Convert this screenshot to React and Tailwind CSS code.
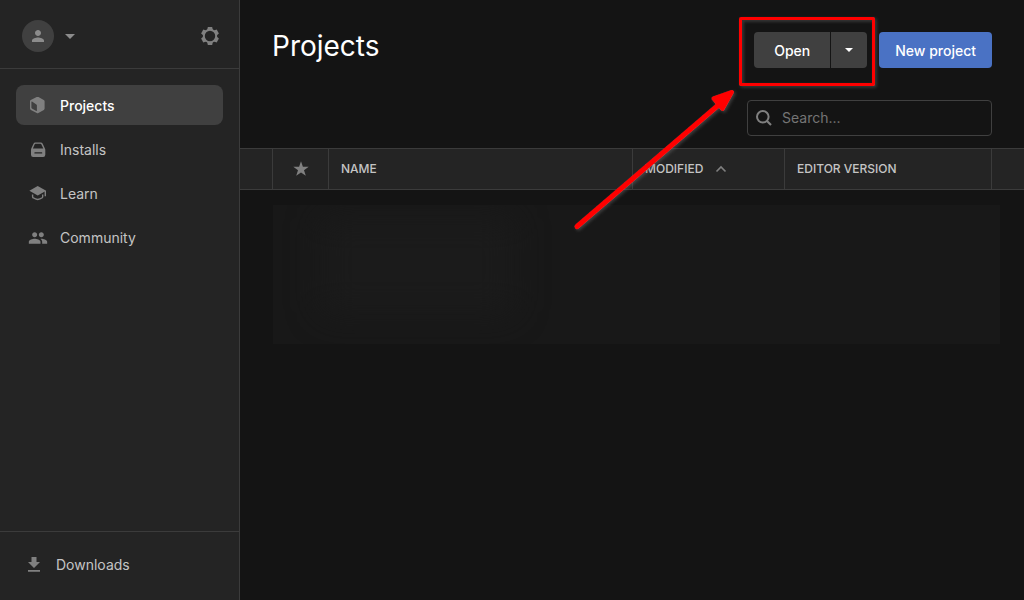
import React from "react";
import { MdPeople, MdPerson } from "react-icons/md";

function Caret({ className }) {
  return (
    <svg viewBox="0 0 10 5" className={className} fill="currentColor" aria-hidden="true">
      <path d="M0 0h10L5 5z" />
    </svg>
  );
}

function GearIcon() {
  return (
    <svg viewBox="-10 -10 20 20" className="size-5" fill="currentColor" aria-hidden="true">
      <circle r="6.2" fill="none" stroke="currentColor" strokeWidth="2" />
      {[0, 60, 120, 180, 240, 300].map((angle) => (
        <path key={angle} transform={`rotate(${angle})`} d="M-2.800-6L-2.200-9h4.400l.600 3L0-5.800z" />
      ))}
    </svg>
  );
}

function CubeIcon() {
  return (
    <svg viewBox="0 1 18 18" className="size-[18px]" fill="currentColor" aria-hidden="true">
      <path
        fillRule="evenodd"
        d="M7.900.9Q8.600.6 9.300.9l5.400 3.100q.9.400.9 1.300v7.200q0 .9-.8 1.400l-5.400 3.100q-.8.400-1.600 0l-5.900-3.100Q1 13.400 1 12.500V5.300q0-.9.800-1.300zM2.400 5.800v5.800q0 .5.500.8l4.400 2.500q.6.300.6-.3V9.300q0-.6-.5-.9L3 5.500q-.6-.3-.6.300z"
      />
    </svg>
  );
}

function DriveIcon() {
  return (
    <svg viewBox="0 0 18 18" className="size-[18px]" fill="currentColor" aria-hidden="true">
      <path
        fillRule="evenodd"
        d="M6.300 1.500h5.400q1.400 0 2 1.300l2.200 4.700q.4.800.4 1.600v4.700q0 2.200-2.200 2.200H4.200q-2.200 0-2.200-2.200V9.100q0-.8.300-1.600l2.200-4.700q.5-1.300 1.800-1.300zM6.400 2.800q-.5 0-.7.500L3.900 7.500h10.400l-2-4.200q-.2-.5-.8-.5zM6 11.200q-.7 0-.7.700t.7.700h6.600q.7 0 .7-.7t-.7-.7z"
      />
    </svg>
  );
}

function LearnIcon() {
  return (
    <svg viewBox="0 0 18 18" className="size-[18px]" fill="currentColor" aria-hidden="true">
      <path d="M.4 5.800L8.700 1l8.500 4.800-8.500 4.700z" />
      <path
        d="M16.300 6v5.300M3.600 9.400v2.400q0 .6.600 1 4.500 3.300 9 0 .5-.4.500-1V9.400"
        fill="none"
        stroke="currentColor"
        strokeWidth="1.400"
      />
    </svg>
  );
}

function DownloadIcon() {
  return (
    <svg viewBox="0 0 12 17" className="h-[17px] w-3" fill="currentColor" aria-hidden="true">
      <path d="M3.500 0h5v5H12L6 11 0 5h3.500zM0 13h12v1.700H0z" />
    </svg>
  );
}

function NavItem({ icon, label, active }) {
  return (
    <li>
      <a
        href="#"
        aria-current={active ? "page" : undefined}
        className={
          active
            ? "flex h-10 items-center gap-3 rounded-lg bg-[#404040] px-3 pt-0.5 font-medium text-white"
            : "flex h-10 items-center gap-3 rounded-lg px-3 pt-0.5 text-[#c4c4c4]"
        }
      >
        <span className="flex w-5 justify-center text-[#808080]">{icon}</span>
        {label}
      </a>
    </li>
  );
}

function Sidebar() {
  return (
    <aside className="flex w-60 shrink-0 flex-col border-r border-[#3b3b3b] bg-[#242424] text-sm">
      <div className="flex h-[69px] items-start justify-between border-b border-[#3b3b3b] pt-5 pr-[19px] pl-[22px]">
        <button type="button" aria-label="Account" className="flex items-center gap-[11px]">
          <span className="flex size-8 items-center justify-center rounded-full bg-[#404040] text-[#8c8c8c]">
            <MdPerson className="size-[18px]" />
          </span>
          <Caret className="h-[5px] w-2.5 text-[#8c8c8c]" />
        </button>
        <button type="button" aria-label="Settings" className="flex h-8 items-center text-[#808080]">
          <GearIcon />
        </button>
      </div>
      <nav className="flex-1 px-4 pt-4">
        <ul className="flex flex-col gap-1">
          <NavItem icon={<CubeIcon />} label="Projects" active />
          <NavItem icon={<DriveIcon />} label="Installs" />
          <NavItem icon={<LearnIcon />} label="Learn" />
          <NavItem icon={<MdPeople className="size-5" />} label="Community" />
        </ul>
      </nav>
      <a
        href="#"
        className="flex h-[69px] items-center gap-4 border-t border-[#3b3b3b] px-7 pb-0.5 text-[#c4c4c4]"
      >
        <span className="text-[#808080]">
          <DownloadIcon />
        </span>
        Downloads
      </a>
    </aside>
  );
}

function Callout() {
  return (
    <svg
      viewBox="0 0 320 240"
      className="pointer-events-none absolute -top-8 right-[-12px] h-60 w-80 max-w-none"
      fill="none"
      aria-hidden="true"
    >
      <defs>
        <filter id="callout-shadow" x="-10%" y="-10%" width="120%" height="120%">
          <feDropShadow dx="1.500" dy="1.500" stdDeviation="1.800" floodColor="#707070" floodOpacity="0.45" />
        </filter>
      </defs>
      <g filter="url(#callout-shadow)">
        <rect x="181.500" y="18.500" width="133" height="66" rx="0.500" stroke="#ff0000" strokeWidth="3" />
        <path d="M18 226.500L163 102" stroke="#ff0000" strokeWidth="5" strokeLinecap="round" />
        <path
          d="M173 92L154.500 98.500 163.500 109z"
          fill="#ff0000"
          stroke="#ff0000"
          strokeWidth="4"
          strokeLinejoin="round"
        />
      </g>
    </svg>
  );
}

function Toolbar() {
  return (
    <header className="flex justify-between px-8 pt-8 pb-3">
      <h1 className="-mt-1 text-[28px] leading-9 text-white">Projects</h1>
      <div className="flex flex-col items-end gap-8">
        <div className="flex gap-3 text-sm font-medium text-white">
          <div className="relative flex gap-px">
            <button type="button" className="h-9 rounded-l bg-[#404040] px-5 pt-0.5">
              Open
            </button>
            <button
              type="button"
              aria-label="More open options"
              className="flex h-9 w-9 items-center justify-center rounded-r bg-[#404040]"
            >
              <Caret className="h-1 w-2" />
            </button>
            <Callout />
          </div>
          <button type="button" className="h-9 rounded bg-[#4a72c4] px-4 pt-0.5">
            New project
          </button>
        </div>
        <label className="flex h-9 w-[245px] items-center gap-2.5 rounded border border-[#404040] px-2">
          <svg viewBox="0 0 16 16" className="size-4 shrink-0 text-[#808080]" fill="none" aria-hidden="true">
            <circle cx="6.800" cy="6.800" r="5.800" stroke="currentColor" strokeWidth="2" />
            <path d="M11 11l4 4" stroke="currentColor" strokeWidth="2.200" />
          </svg>
          <input
            type="search"
            aria-label="Search projects"
            placeholder="Search..."
            className="h-8 min-w-0 flex-1 bg-transparent pb-0.5 text-sm text-white outline-none placeholder:text-[#757575]"
          />
        </label>
      </div>
    </header>
  );
}

function ProjectTable() {
  return (
    <table className="w-full table-fixed border-separate border-spacing-0 text-xs text-[#c4c4c4]">
      <colgroup>
        <col className="w-[33px]" />
        <col className="w-14" />
        <col />
        <col className="w-[152px]" />
        <col className="w-[207px]" />
        <col className="w-8" />
      </colgroup>
      <thead className="bg-[#242424]">
        <tr className="h-[42px] text-left *:border-y *:border-[#3b3b3b] *:font-medium">
          <td className="border-r" />
          <th scope="col" aria-label="Favorite" className="border-r">
            <svg viewBox="0 0 16 16" className="mx-auto size-4 text-[#808080]" fill="currentColor" aria-hidden="true">
              <path d="M8 .3l1.900 5.500h5.800L11 9.300l1.800 5.500L8 11.500l-4.800 3.300L5 9.300.3 5.800h5.800z" />
            </svg>
          </th>
          <th scope="col" className="border-r px-3">
            NAME
          </th>
          <th scope="col" aria-sort="ascending" className="border-r px-3">
            <button type="button" className="flex items-center gap-3">
              MODIFIED
              <svg viewBox="0 0 12 8" className="h-2 w-3 text-[#808080]" fill="none" aria-hidden="true">
                <path d="M1.500 6.500L6 2l4.500 4.500" stroke="currentColor" strokeWidth="1.600" />
              </svg>
            </button>
          </th>
          <th scope="col" className="border-r px-3">
            EDITOR VERSION
          </th>
          <td />
        </tr>
      </thead>
    </table>
  );
}

export default function App() {
  return (
    <div className="flex min-h-screen bg-[#141414] font-['Inter',sans-serif]">
      <Sidebar />
      <main className="min-w-0 flex-1">
        <Toolbar />
        <ProjectTable />
        <div className="mt-[15px] mr-6 ml-[33px] h-[139px] overflow-hidden bg-[#181818] px-12 py-3">
          <div className="h-24 w-48 rounded-lg bg-[#1b1b1b] blur-lg" />
        </div>
      </main>
    </div>
  );
}
